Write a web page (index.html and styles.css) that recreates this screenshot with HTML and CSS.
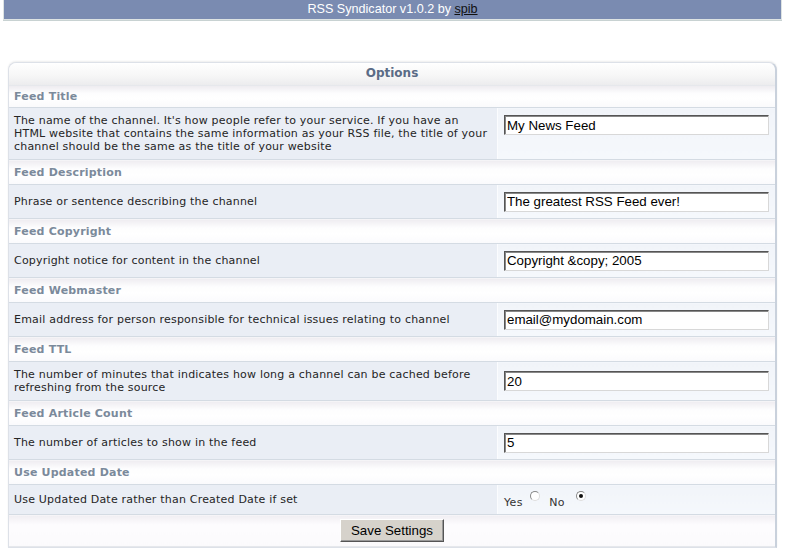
FILE: index.html
```html
<!DOCTYPE html>
<html lang="en">
<head>
    <meta charset="UTF-8">
    <title>RSS Syndicator Options</title>
    <link rel="stylesheet" href="styles.css">
</head>
<body>
    <div class="topbar">RSS Syndicator v1.0.2 by <a href="#">spib</a></div>

    <form class="panel">
        <div class="panel-title">Options</div>
        <table class="options">
            <tr class="section first"><td colspan="2">Feed Title</td></tr>
            <tr class="row">
                <td class="desc">The name of the channel. It's how people refer to your service. If you have an HTML website that contains the same information as your RSS file, the title of your channel should be the same as the title of your website</td>
                <td class="field top"><input type="text" value="My News Feed"></td>
            </tr>

            <tr class="section"><td colspan="2">Feed Description</td></tr>
            <tr class="row">
                <td class="desc">Phrase or sentence describing the channel</td>
                <td class="field"><input type="text" value="The greatest RSS Feed ever!"></td>
            </tr>

            <tr class="section"><td colspan="2">Feed Copyright</td></tr>
            <tr class="row">
                <td class="desc">Copyright notice for content in the channel</td>
                <td class="field"><input type="text" value="Copyright &amp;copy; 2005"></td>
            </tr>

            <tr class="section"><td colspan="2">Feed Webmaster</td></tr>
            <tr class="row">
                <td class="desc">Email address for person responsible for technical issues relating to channel</td>
                <td class="field"><input type="text" value="email@mydomain.com"></td>
            </tr>

            <tr class="section"><td colspan="2">Feed TTL</td></tr>
            <tr class="row">
                <td class="desc">The number of minutes that indicates how long a channel can be cached before refreshing from the source</td>
                <td class="field"><input type="text" value="20"></td>
            </tr>

            <tr class="section"><td colspan="2">Feed Article Count</td></tr>
            <tr class="row">
                <td class="desc">The number of articles to show in the feed</td>
                <td class="field"><input type="text" value="5"></td>
            </tr>

            <tr class="section"><td colspan="2">Use Updated Date</td></tr>
            <tr class="row short">
                <td class="desc">Use Updated Date rather than Created Date if set</td>
                <td class="field radios">
                    Yes <input type="radio" name="updated"> No <input type="radio" class="last" name="updated" checked>
                </td>
            </tr>

            <tr class="buttons">
                <td colspan="2"><button type="button">Save Settings</button></td>
            </tr>
        </table>
    </form>
</body>
</html>
```

FILE: styles.css
```css
body {
    margin: 0;
    font-family: "DejaVu Sans", Verdana, sans-serif;
    font-size: 11px;
    color: #222;
    background: #fff;
}
.topbar {
    margin: 0 3px;
    height: 19px;
    line-height: 19px;
    background-color: #7a8bb1;
    border: 1px solid #dde3e3;
    border-top: none;
    box-shadow: 0 1px 0 #c8d2d2;
    color: #fff;
    text-align: center;
    font-family: "Liberation Sans", Arial, sans-serif;
    font-size: 12.6px;
}
.topbar a {
    color: #111;
}
.panel {
    margin: 42px 8px 0 8px;
    border: 1px solid #dde1e8;
    border-right: 2px solid #c9d1dc;
    border-radius: 8px 8px 0 0;
    background: #fcfbfd;
    box-shadow: 0 -1px 2px #eee;
}
.panel-title {
    height: 22px;
    line-height: 21px;
    text-align: center;
    font-weight: bold;
    font-size: 12px;
    color: #5b6c86;
    background: linear-gradient(#ffffff, #f6f6f6 60%, #ececee);
    border-bottom: 1px solid #e6e8ec;
    border-radius: 8px 8px 0 0;
}
.options {
    width: 100%;
    border-collapse: collapse;
}
.options td {
    padding: 0;
}
.section td {
    height: 24px;
    padding-left: 5px;
    font-weight: bold;
    letter-spacing: 0.2px;
    color: #7b8a9b;
    background: linear-gradient(#eeecf0, #fdfdfe 35%, #fff 60%, #fafafc);
    border-bottom: 1px solid #d4dbe3;
}
.section.first td {
    height: 21px;
}
.row td {
    border-bottom: 1px solid #d4dbe3;
}
.row .desc {
    width: 479px;
    height: 21px;
    padding: 6px 5px;
    background-color: #eaeef5;
    line-height: 13px;
    letter-spacing: 0.2px;
    color: #252525;
}
.row .field {
    padding: 0 6px;
    background: linear-gradient(#f1f4f9, #f5f8fc);
    border-left: 1px solid #fbfcfe;
}
.row .field.top {
    vertical-align: top;
    padding-top: 7px;
}
.row.short .desc {
    height: 17px;
}
.field input[type="text"] {
    box-sizing: border-box;
    width: 265px;
    height: 20px;
    margin: 0;
    padding: 0 2px;
    border: 1px solid;
    border-color: #555 #d8d8d8 #d8d8d8 #555;
    box-shadow: inset 1px 1px 0 #888;
    background: #fff;
    font-family: "Liberation Sans", Arial, sans-serif;
    font-size: 13.3px;
    color: #000;
    outline: none;
}
.radios {
    font-size: 11px;
    letter-spacing: 0.3px;
    color: #333;
    padding-top: 5px;
}
.radios input[type="radio"] {
    appearance: none;
    width: 10px;
    height: 10px;
    margin: 0 5px 0 4px;
    border: 1px solid;
    border-color: #888 #ddd #ddd #888;
    border-radius: 50%;
    background: #fff;
    vertical-align: 5px;
    position: relative;
}
.radios input[type="radio"].last {
    margin-left: 7px;
}
.radios input[type="radio"]:checked::after {
    content: "";
    position: absolute;
    left: 2px;
    top: 2px;
    width: 4px;
    height: 4px;
    border-radius: 50%;
    background: #111;
}
.buttons td {
    height: 31px;
    text-align: center;
    background: linear-gradient(#f0eef2, #fdfcfe 30%, #fbfafc);
    border-bottom: 1px solid #e6e8ec;
}
.buttons button {
    height: 23px;
    padding: 0 10px;
    font-family: "Liberation Sans", Arial, sans-serif;
    font-size: 13.3px;
    color: #000;
    background: #d6d2cb;
    border: 1px solid;
    border-color: #fff #555 #555 #fff;
    box-shadow: inset -1px -1px 0 #999;
}
```
